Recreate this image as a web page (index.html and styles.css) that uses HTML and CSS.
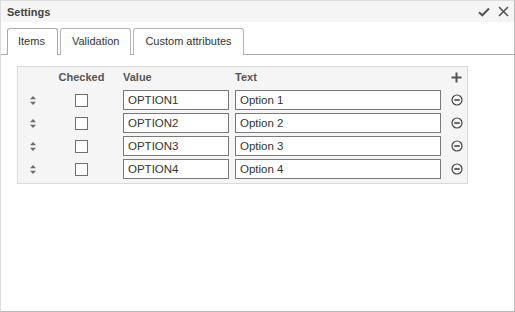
FILE: index.html
```html
<!DOCTYPE html>
<html lang="en">
<head>
    <meta charset="UTF-8">
    <title>Settings</title>
    <link rel="stylesheet" href="styles.css">
</head>
<body>
    <div class="dialog">
        <div class="dialog-title">
            <span class="title-text">Settings</span>
            <div class="title-actions">
                <svg class="icon-check" width="12" height="10" viewBox="0 0 12 10">
                    <path d="M1 5.2 L4.3 8.3 L11 1.5" fill="none" stroke="#555" stroke-width="2"/>
                </svg>
                <svg class="icon-close" width="11" height="11" viewBox="0 0 11 11">
                    <path d="M1 1 L10 10 M10 1 L1 10" fill="none" stroke="#555" stroke-width="1.6"/>
                </svg>
            </div>
        </div>

        <div class="tabs">
            <div class="tab active">Items</div>
            <div class="tab">Validation</div>
            <div class="tab">Custom attributes</div>
        </div>

        <div class="tab-body">
            <div class="items-grid">
                <!-- header -->
                <div class="cell"></div>
                <div class="cell head center">Checked</div>
                <div class="cell head value-col">Value</div>
                <div class="cell head text-col">Text</div>
                <div class="cell action-col">
                    <svg width="11" height="11" viewBox="0 0 11 11">
                        <path d="M5.5 0.5 V10.5 M0.5 5.5 H10.5" stroke="#555" stroke-width="2"/>
                    </svg>
                </div>
            </div>
            <div class="items-grid rows" id="rows"></div>
        </div>
    </div>

    <script>
        // Build the option rows
        const options = [
            { value: "OPTION1", text: "Option 1" },
            { value: "OPTION2", text: "Option 2" },
            { value: "OPTION3", text: "Option 3" },
            { value: "OPTION4", text: "Option 4" }
        ];
        const rows = document.getElementById("rows");

        options.forEach(function (opt) {
            rows.insertAdjacentHTML("beforeend", `
                <div class="cell center">
                    <svg width="6" height="9" viewBox="0 0 6 9">
                        <path d="M3 0 L6 3.3 H0 Z M3 9 L6 5.7 H0 Z" fill="#6b6b6b"/>
                    </svg>
                </div>
                <div class="cell center"><span class="checkbox"></span></div>
                <div class="cell value-col"><input class="field" type="text" value="${opt.value}"></div>
                <div class="cell text-col"><input class="field" type="text" value="${opt.text}"></div>
                <div class="cell action-col">
                    <svg width="12" height="12" viewBox="0 0 12 12">
                        <circle cx="6" cy="6" r="5" fill="none" stroke="#444" stroke-width="1.2"/>
                        <path d="M3.3 6 H8.7" stroke="#444" stroke-width="1.6"/>
                    </svg>
                </div>`);
        });
    </script>
</body>
</html>
```

FILE: styles.css
```css
body {
    margin: 0;
    font-family: "Liberation Sans", Arial, sans-serif;
    color: #333;
    background: #fff;
}

.dialog {
    width: 513px;
    height: 310px;
    border: 1px solid #dcdcdc;
    border-right-color: #b9b9b9;
    border-bottom-color: #b9b9b9;
    box-shadow: 1px 1px 0 #e6e6e6;
    background: #fff;
    display: flex;
    flex-direction: column;
}

/* Title bar */
.dialog-title {
    height: 21px;
    background: #f5f5f5;
    display: flex;
    align-items: center;
    justify-content: space-between;
    padding: 0 6px;
}

.title-text {
    font-size: 11px;
    font-weight: bold;
    color: #444;
}

.title-actions {
    display: flex;
    align-items: center;
    gap: 8px;
    margin-right: -1px;
}

/* Tabs */
.tabs {
    display: flex;
    gap: 2px;
    padding: 6px 0 0 6px;
    border-bottom: 1px solid #a9a9a9;
}

.tab {
    font-size: 11px;
    line-height: 25px;
    padding: 0 11px;
    border: 1px solid #b4b4b4;
    border-bottom: none;
    border-radius: 3px 3px 0 0;
    background: #fff;
    color: #333;
    margin-bottom: -1px;
}

.tab.active {
    padding: 0 12px 1px 10px;
    border-color: #a9a9a9;
}

.tab-body {
    padding: 11px 0 0 16px;
}

/* Items table */
.items-grid {
    width: 449px;
    display: grid;
    grid-template-columns: 30px 67px 114px 212px 26px;
    background: #f5f5f5;
    border: 1px solid #dadada;
}

.items-grid:first-child {
    border-bottom: none;
    padding: 3px 0 6px;
    align-items: center;
}

.items-grid.rows {
    border-top: none;
    row-gap: 3px;
    padding-bottom: 4px;
}

.cell {
    display: flex;
    align-items: center;
    height: 20px;
}

.items-grid:first-child .cell {
    height: 14px;
}

.center {
    justify-content: center;
}

.head {
    font-size: 11px;
    font-weight: bold;
    color: #555;
}

.value-col {
    padding-left: 8px;
}

.text-col {
    padding-left: 6px;
}

.action-col {
    justify-content: center;
    padding-left: 5px;
}

.field {
    box-sizing: border-box;
    width: 100%;
    height: 20px;
    margin: 0;
    padding: 0 4px;
    border: 1px solid #7a7a7a;
    background: #fff;
    font-family: "Liberation Sans", Arial, sans-serif;
    font-size: 11.5px;
    color: #333;
    outline: none;
}

.value-col .field {
    width: 106px;
}

.checkbox {
    width: 11px;
    height: 11px;
    border: 1px solid #6f6f6f;
    background: #fff;
}
```
